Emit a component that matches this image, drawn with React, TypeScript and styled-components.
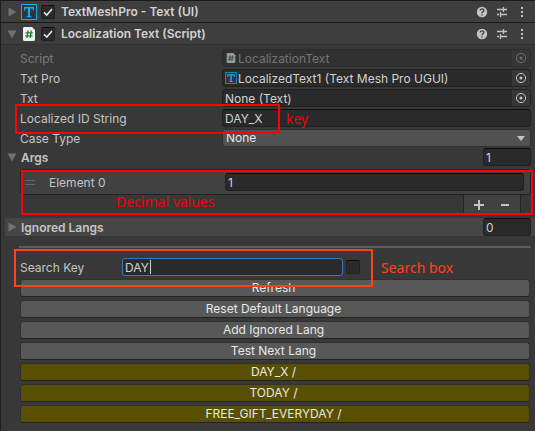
import React, { useState } from "react";
import styled, { createGlobalStyle, css } from "styled-components";

const Global = createGlobalStyle`
  *, *::before, *::after { box-sizing: border-box; }
  body { margin: 0; background: #383838; }
  button, input, select { font: inherit; color: inherit; margin: 0; }
`;

const Inspector = styled.main`
  min-height: 100vh;
  border-top: 1px solid #1a1a1a;
  border-left: 1px solid #1f1f1f;
  background: #383838;
  color: #c4c4c4;
  font: 12px/18px Inter, "Liberation Sans", sans-serif;
`;

const Header = styled.header`
  display: flex;
  align-items: center;
  height: 22px;
  padding: 0 7px 0 5px;
  background: #3e3e3e;
  border-bottom: 1px solid #1a1a1a;

  & + & {
    border-color: #303030;
  }
`;

const HeaderTitle = styled.div`
  display: flex;
  flex: 1;
  align-items: center;
  gap: 4px;
  margin-left: 3px;
  font-weight: 600;
  white-space: nowrap;
  color: #d2d2d2;
`;

const TitleLabel = styled.label`
  margin-left: 2px;
`;

const HeaderTools = styled.div`
  display: flex;
  gap: 8px;
`;

const IconButton = styled.button`
  display: flex;
  align-items: center;
  justify-content: center;
  width: 12px;
  height: 18px;
  padding: 0;
  border: 0;
  background: none;
  color: #c4c4c4;
`;

const Foldout = styled(IconButton)`
  color: #707070;
`;

const Glyph = styled.svg<{ $inset?: number }>`
  display: block;
  flex: none;
  margin: 0 ${(p) => p.$inset ?? 0}px;
`;

const Tick = styled.input`
  appearance: none;
  flex: none;
  width: 14px;
  height: 14px;
  border: 1px solid #212121;
  border-top-color: #0d0d0d;
  border-radius: 2px;
  background: #2a2a2a center / 12px 12px no-repeat;

  &:checked {
    background-image: url("data:image/svg+xml,%3Csvg xmlns='http://www.w3.org/2000/svg' viewBox='0 0 12 12'%3E%3Cpath d='M2 6.3 4.8 9 10 3' fill='none' stroke='%23e4e4e4' stroke-width='1.6'/%3E%3C/svg%3E");
  }
`;

const Fields = styled.div`
  display: flex;
  flex-direction: column;
  gap: 2px;
  padding: 3px 4px 0 19px;
`;

const Row = styled.div<{ $muted?: boolean }>`
  position: relative;
  display: grid;
  grid-template-columns: 202px 1fr;
  align-items: center;
  height: 18px;
  color: ${(p) => (p.$muted ? "#7b7b7b" : "#c4c4c4")};
`;

const FieldLabel = styled.label`
  padding-top: 2px;
`;

const fieldBox = css`
  height: 18px;
  border: 1px solid #212121;
  border-top-color: #0d0d0d;
  border-radius: 3px;
  background: #2a2a2a;
`;

const TextField = styled.input`
  ${fieldBox}
  width: 100%;
  min-width: 0;
  padding: 2px 2px 0;
  color: #d2d2d2;
  outline: none;
`;

const ObjectBox = styled.div<{ $muted?: boolean }>`
  ${fieldBox}
  display: flex;
  align-items: center;
  gap: 1px;
  padding-left: 2px;
  overflow: hidden;
  color: ${(p) => (p.$muted ? "#747474" : "#d2d2d2")};
  background: ${(p) => (p.$muted ? "#313131" : "#2a2a2a")};
  border-color: ${(p) => (p.$muted ? "#2c2c2c" : "#212121")};
`;

const ObjectValue = styled.input`
  flex: 1;
  min-width: 0;
  height: 16px;
  padding: 2px 0 0;
  border: 0;
  outline: none;
  background: none;
`;

const Picker = styled(IconButton)<{ $muted?: boolean }>`
  width: 18px;
  height: 16px;
  background: #373737;
  color: ${(p) => (p.$muted ? "#707070" : "#c4c4c4")};
`;

const SelectBox = styled.select`
  appearance: none;
  width: 100%;
  height: 18px;
  padding: 0 3px;
  border: 1px solid #303030;
  border-radius: 3px;
  color: #e4e4e4;
  line-height: 16px;
  background: #515151 url("data:image/svg+xml,%3Csvg xmlns='http://www.w3.org/2000/svg' viewBox='0 0 8 5'%3E%3Cpath d='M0 0h8L4 5z' fill='%23c4c4c4'/%3E%3C/svg%3E") right 5px center / 8px 5px no-repeat;
`;

const Section = styled.div<{ $lit?: boolean }>`
  display: flex;
  align-items: center;
  height: 18px;
  margin: ${(p) => (p.$lit ? "4px 0 0 4px" : "2px 0 0 4px")};
  padding: 0 4px 0 1px;
  background: ${(p) => (p.$lit ? "#464646" : "transparent")};
`;

const SectionTitle = styled(FieldLabel)`
  flex: 1;
  margin-left: 3px;
  font-weight: 600;
`;

const SizeField = styled(TextField)`
  width: 48px;
`;

const List = styled.div`
  position: relative;
  margin: 3px 4px 0 19px;
`;

const ListItem = styled.div`
  display: grid;
  grid-template-columns: 28px 176px 1fr;
  align-items: center;
  height: 26px;
  padding: 0 6px 0 0;
  background: #414141;
  border: 1px solid #242424;
  border-radius: 3px;
`;

const Grip = styled.span`
  width: 10px;
  height: 5px;
  margin-left: 4px;
  border: solid #666;
  border-width: 1px 0;
`;

const ListFooter = styled.div`
  display: flex;
  justify-content: flex-end;
  height: 19px;
  padding-right: 10px;
`;

const FooterTab = styled.div`
  display: flex;
  align-items: center;
  justify-content: space-around;
  width: 58px;
  padding: 0 2px;
  background: #414141;
  border: solid #242424;
  border-width: 0 1px;
`;

const Divider = styled.hr`
  height: 2px;
  margin: 10px 4px 0 18px;
  border: 0;
  background: #5c5c5c;
`;

const SearchRow = styled.div`
  position: relative;
  display: flex;
  align-items: center;
  height: 18px;
  margin: 10px 4px 3px 19px;
`;

const SearchLabel = styled(FieldLabel)`
  width: 102px;
`;

const SearchField = styled.div`
  position: relative;
  width: 221px;
  margin-right: 3px;
`;

const SearchInput = styled(TextField)`
  display: block;
  border-color: #3a79bb;
  caret-color: transparent;
`;

const Caret = styled.span`
  position: absolute;
  top: 2px;
  left: 28px;
  width: 1px;
  height: 14px;
  background: #d2d2d2;
`;

const Actions = styled.div`
  display: flex;
  flex-direction: column;
  gap: 3px;
  padding: 0 5px 7px 19px;
`;

const ActionButton = styled.button<{ $match?: boolean }>`
  height: 18px;
  padding: 0 3px 0 0;
  border: 1px solid #303030;
  border-bottom-color: #242424;
  border-radius: 3px;
  line-height: 16px;
  color: #e8e8e8;
  background: ${(p) => (p.$match ? "#585000" : "#585858")};
`;

const Outline = styled.div<{ $kind: "key" | "list" | "search" }>`
  position: absolute;
  z-index: 1;
  pointer-events: none;
  border: 2px solid ${(p) => (p.$kind === "search" ? "#ff421c" : "#ff0008")};
  ${(p) => p.$kind === "key" && "left: -5px; top: -4px; width: 265px; height: 30px;"}
  ${(p) => p.$kind === "list" && "left: 1px; right: -2px; top: 1px; bottom: -1px;"}
  ${(p) => p.$kind === "search" && "left: -6px; top: -9px; width: 359px; height: 38px;"}
`;

const Note = styled.span<{ $kind: "key" | "list" | "search" }>`
  position: absolute;
  z-index: 1;
  white-space: nowrap;
  font: 14px/18px "Noto Sans", "Open Sans", sans-serif;
  color: ${(p) => (p.$kind === "search" ? "#ff421c" : "#f0000c")};
  ${(p) => p.$kind === "key" && "left: 266px; top: 2px;"}
  ${(p) => p.$kind === "list" && "left: 96px; bottom: 3px;"}
  ${(p) => p.$kind === "search" && "left: 361px; top: 1px;"}
`;

const Triangle = ({ open }: { open?: boolean }) => (
  <svg width="10" height="10" viewBox="0 0 10 10">
    <path d={open ? "M.5 1.5h9L5 9.5z" : "M1.5.5v9l8-4.5z"} fill="currentColor" />
  </svg>
);

const TextIcon = ({ size }: { size: number }) => (
  <Glyph width={size} height={size} viewBox="0 0 16 16">
    <path d="M.5.5h15v15H.5z" fill="#303538" stroke="#0eb0f0" />
    <path d="M3 3h10v3.5h-1L11.5 4.5H9v7.5l1.5.5v.8h-5v-.8L7 12V4.5H4.5L4 6.5H3z" fill="#0eb0f0" />
  </Glyph>
);

const Script = ({ small }: { small?: boolean }) => (
  <Glyph
    $inset={small ? 1 : 2}
    width={small ? 10 : 12}
    height={small ? 10 : 14}
    viewBox="0 0 12 14"
    opacity={small ? 0.55 : 1}
  >
    <path d="M1 0h8l3 3v10l-1 1H1l-1-1V1z" fill="#f0f0f0" />
    <path d="M5 3.5 4 11M8.2 3.5 7.2 11M2.5 5.8h7.3M2.2 8.8h7.3" stroke="#247a2c" strokeWidth="1.3" />
  </Glyph>
);

const Target = () => (
  <svg width="12" height="12" viewBox="0 0 12 12">
    <circle cx="6" cy="6" r="4.6" fill="none" stroke="currentColor" />
    <circle cx="6" cy="6" r="1.5" fill="currentColor" />
  </svg>
);

const Tools = () => (
  <HeaderTools>
    <IconButton aria-label="Help">
      <svg width="12" height="12" viewBox="0 0 12 12">
        <circle cx="6" cy="6" r="5.2" fill="currentColor" />
        <path d="M4.2 4.6c0-2.3 3.6-2.3 3.6-.1C7.8 5.8 6 5.8 6 7.2M6 8.2v1.3" fill="none" stroke="#3e3e3e" strokeWidth="1.4" />
      </svg>
    </IconButton>
    <IconButton aria-label="Presets">
      <svg width="12" height="12" viewBox="0 0 12 12">
        <path d="M1 3.5h6M8 3.5h3M7.5 1v5M1 8.5h2M5 8.5h6M4.5 6v5" fill="none" stroke="currentColor" strokeWidth="1.3" />
      </svg>
    </IconButton>
    <IconButton aria-label="More options">
      <svg width="12" height="12" viewBox="0 0 12 12">
        <path d="M5 1h2v2H5zM5 5h2v2H5zM5 9h2v2H5z" fill="currentColor" />
      </svg>
    </IconButton>
  </HeaderTools>
);

interface ObjectFieldProps {
  id: string;
  label: string;
  value: string;
  icon?: React.ReactNode;
  muted?: boolean;
}

const ObjectField = ({ id, label, value, icon, muted }: ObjectFieldProps) => (
  <Row $muted={muted}>
    <FieldLabel htmlFor={id}>{label}</FieldLabel>
    <ObjectBox $muted={muted}>
      {icon}
      <ObjectValue id={id} value={value} readOnly />
      <Picker $muted={muted} disabled={muted} aria-label={`Select ${label}`}>
        <Target />
      </Picker>
    </ObjectBox>
  </Row>
);

const actions = ["Refresh", "Reset Default Language", "Add Ignored Lang", "Test Next Lang"];
const matches = ["DAY_X /", "TODAY /", "FREE_GIFT_EVERYDAY /"];

export default function App() {
  const [search, setSearch] = useState("DAY");
  return (
    <>
      <Global />
      <Inspector>
        <Header>
          <Foldout aria-label="Expand TextMeshPro"><Triangle /></Foldout>
          <HeaderTitle>
            <TextIcon size={16} />
            <Tick id="tmp" type="checkbox" defaultChecked />
            <TitleLabel htmlFor="tmp">TextMeshPro - Text (UI)</TitleLabel>
          </HeaderTitle>
          <Tools />
        </Header>
        <Header>
          <Foldout aria-label="Collapse Localization Text"><Triangle open /></Foldout>
          <HeaderTitle>
            <Script />
            <Tick id="loc" type="checkbox" defaultChecked />
            <TitleLabel htmlFor="loc">Localization Text (Script)</TitleLabel>
          </HeaderTitle>
          <Tools />
        </Header>

        <Fields>
          <ObjectField id="script" label="Script" value="LocalizationText" icon={<Script small />} muted />
          <ObjectField id="txtpro" label="Txt Pro" value="LocalizedText1 (Text Mesh Pro UGUI)" icon={<TextIcon size={12} />} />
          <ObjectField id="txt" label="Txt" value="None (Text)" />
          <Row>
            <FieldLabel htmlFor="key">Localized ID String</FieldLabel>
            <TextField id="key" defaultValue="DAY_X" />
            <Outline $kind="key" />
            <Note $kind="key">key</Note>
          </Row>
          <Row>
            <FieldLabel htmlFor="case">Case Type</FieldLabel>
            <SelectBox id="case"><option>None</option></SelectBox>
          </Row>
        </Fields>

        <Section>
          <Foldout aria-label="Collapse Args"><Triangle open /></Foldout>
          <SectionTitle htmlFor="args">Args</SectionTitle>
          <SizeField id="args" defaultValue="1" />
        </Section>
        <List>
          <ListItem>
            <Grip />
            <FieldLabel htmlFor="el0">Element 0</FieldLabel>
            <TextField id="el0" defaultValue="1" />
          </ListItem>
          <ListFooter>
            <FooterTab>
              <IconButton aria-label="Add element">
                <svg width="10" height="10" viewBox="0 0 10 10"><path d="M5 0v10M0 5h10" stroke="currentColor" strokeWidth="2" /></svg>
              </IconButton>
              <IconButton aria-label="Remove element">
                <svg width="8" height="10" viewBox="0 0 8 10"><path d="M0 5h8" stroke="currentColor" strokeWidth="2" /></svg>
              </IconButton>
            </FooterTab>
          </ListFooter>
          <Outline $kind="list" />
          <Note $kind="list">Decimal values</Note>
        </List>
        <Section $lit>
          <Foldout aria-label="Expand Ignored Langs"><Triangle /></Foldout>
          <SectionTitle htmlFor="ignored">Ignored Langs</SectionTitle>
          <SizeField id="ignored" defaultValue="0" />
        </Section>

        <Divider />
        <SearchRow>
          <SearchLabel htmlFor="search">Search Key</SearchLabel>
          <SearchField>
            <SearchInput id="search" value={search} onChange={(e) => setSearch(e.target.value)} />
            {search === "DAY" && <Caret />}
          </SearchField>
          <Tick type="checkbox" aria-label="Search option" />
          <Outline $kind="search" />
          <Note $kind="search">Search box</Note>
        </SearchRow>
        <Actions>
          {actions.map((name) => <ActionButton key={name}>{name}</ActionButton>)}
          {matches.map((name) => <ActionButton key={name} $match>{name}</ActionButton>)}
        </Actions>
      </Inspector>
    </>
  );
}
